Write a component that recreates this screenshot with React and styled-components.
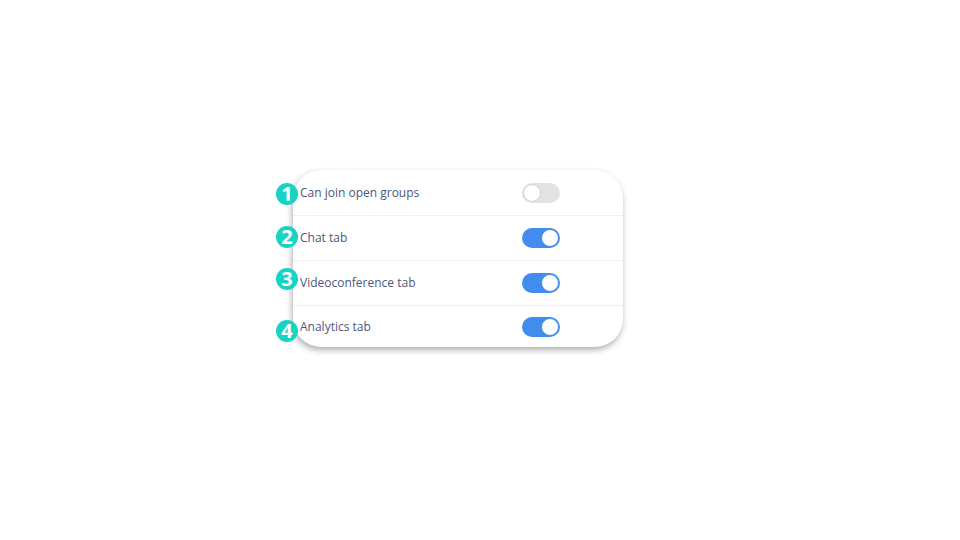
import React from "react"
import styled, { createGlobalStyle } from "styled-components"

const GlobalStyle = createGlobalStyle`
  body {
    margin: 0;
    background: #fff;
    font-family: "Open Sans", "Liberation Sans", sans-serif;
  }
`

const Page = styled.div`
  width: 960px;
  height: 540px;
  padding: 170px 0 0 293px;
  box-sizing: border-box;
`

const Card = styled.div`
  width: 330px;
  height: 177px;
  padding-top: 1px;
  box-sizing: border-box;
  background: #fff;
  border-radius: 28px;
  box-shadow: -1px 3px 6px rgba(0, 0, 0, 0.32);
  display: flex;
  flex-direction: column;
`

const Row = styled.div`
  position: relative;
  height: 45px;
  flex: none;
  display: flex;
  align-items: center;
  padding: 0 63px 0 7px;
  box-sizing: border-box;
  border-bottom: 1px dotted #e2e2e2;

  &:last-child {
    height: 41px;
    border-bottom: none;
  }
`

const Label = styled.span`
  flex: 1;
  font-size: 12px;
  color: #4b587c;
  margin-top: -1px;
`

const Badge = styled.span`
  position: absolute;
  left: -17px;
  top: ${p => p.$top}px;
  width: 22px;
  height: 22px;
  border-radius: 50%;
  background: #17d3c3;
  color: #fff;
  font-weight: 700;
  font-size: 20px;
  line-height: 21px;
  text-align: center;
`

const Toggle = styled.span`
  position: relative;
  width: 38px;
  height: 20px;
  border-radius: 10px;
  background: ${p => (p.$on ? "#418cec" : "#e3e3e3")};
  flex: none;

  &::after {
    content: "";
    position: absolute;
    top: 1px;
    left: ${p => (p.$on ? "19px" : "1px")};
    width: 16px;
    height: 16px;
    border-radius: 50%;
    background: #fff;
    border: 1px solid ${p => (p.$on ? "#418cec" : "#d2d2d2")};
  }
`

const rows = [
  { label: "Can join open groups", on: false, badge: 12 },
  { label: "Chat tab", on: true, badge: 10 },
  { label: "Videoconference tab", on: true, badge: 7 },
  { label: "Analytics tab", on: true, badge: 14 },
]

const App = () => (
  <>
    <GlobalStyle />
    <Page>
      <Card>
        {rows.map((r, i) => (
          <Row key={r.label}>
            <Badge $top={r.badge}>{i + 1}</Badge>
            <Label>{r.label}</Label>
            <Toggle $on={r.on} />
          </Row>
        ))}
      </Card>
    </Page>
  </>
)

export default App
